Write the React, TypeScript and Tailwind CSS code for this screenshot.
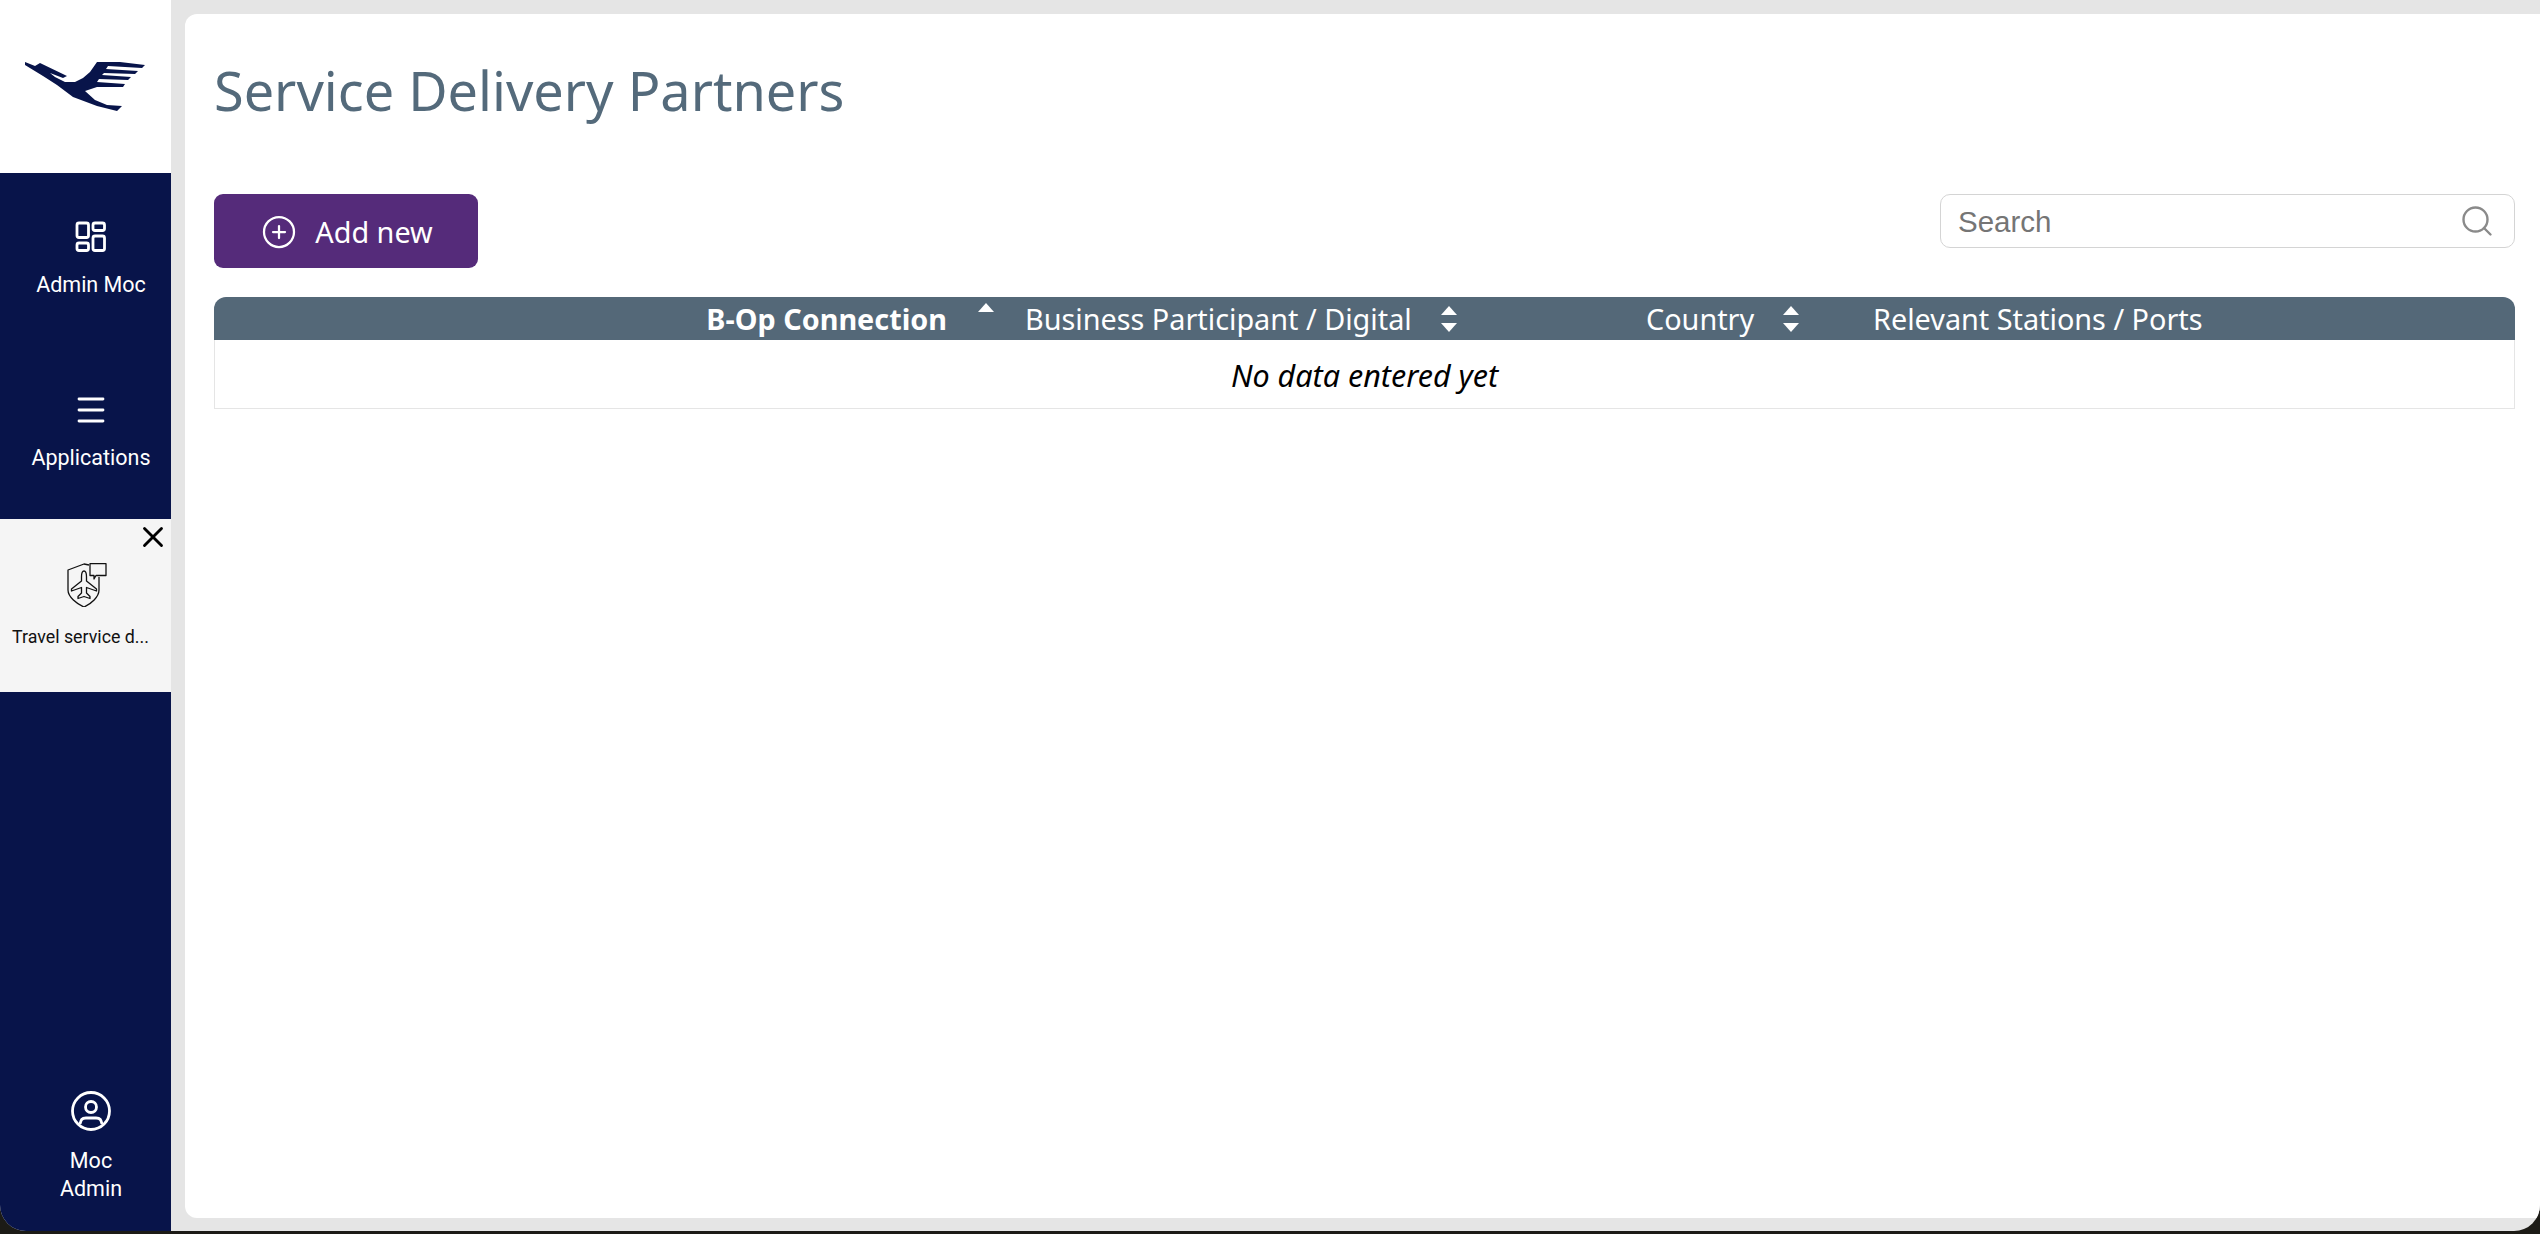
import { CirclePlus, Search, X } from "lucide-react"

const notoSans = "font-['Noto_Sans',sans-serif]"
const roboto = "font-['Roboto',sans-serif]"

function CraneLogo() {
  return (
    <svg viewBox="0 0 171 173" className="h-[173px] w-[171px]" fill="#08144a">
      <path d="M25 62 35 66 40 63 67 76 63 78 50 73 55 77 65 82 75 82 83 78 90 72 97 62 120 62 145 65 142 68 108 66 106 69 138 71 135 74 104 73 102 75 131 77 128 80 99 79 97 82 125 84 123 87 97 87 85 91 95 100 107 105 122 106 117 111 97 106 73 97 57 85 43 76 25 65Z" />
    </svg>
  )
}

function TilesIcon() {
  return (
    <svg viewBox="0 0 32 32" className="h-8 w-8" fill="none" stroke="white" strokeWidth="2.8">
      <rect x="2" y="2" width="11.5" height="14.5" rx="2" />
      <rect x="18" y="2" width="11.5" height="7.5" rx="2" />
      <rect x="2" y="22" width="11.5" height="7.5" rx="2" />
      <rect x="18" y="15" width="11.5" height="14.5" rx="2" />
    </svg>
  )
}

function LinesIcon() {
  return (
    <svg viewBox="0 0 28 26" className="h-[26px] w-7" fill="none" stroke="white" strokeWidth="2.8" strokeLinecap="round">
      <path d="M2 2h24M2 13h24M2 24h24" />
    </svg>
  )
}

function ShieldPlaneIcon() {
  return (
    <svg viewBox="0 0 40 44" className="h-[44px] w-10" fill="none" stroke="#111" strokeWidth="1.3" strokeLinejoin="round">
      <path d="M22 2 17 1 1 7V27C1 34 10 41 17 44 24 41 32 34 32 27V14" />
      <path d="M23 0.7H39V12.5H29L27 16V12.5H23Z" />
      <path d="M17 8C15 8 14.5 11 14.5 14V18L4.5 26V28L14.5 24.5V30L11 33.5V35.5L17 33.5 23 35.5V33.5L19.5 30V24.5L29.5 28V26L19.5 18V14C19.5 11 19 8 17 8Z" />
    </svg>
  )
}

function UserCircleIcon() {
  return (
    <svg viewBox="0 0 40 40" className="h-10 w-10" fill="none" stroke="white" strokeWidth="2.8">
      <circle cx="20" cy="20" r="18.5" />
      <circle cx="20" cy="16" r="5.5" />
      <path d="M9 33C10 29 10.5 27 15 27H25C29.5 27 30 29 31 33" />
    </svg>
  )
}

function SortIcon({ upOnly }: { upOnly?: boolean }) {
  return (
    <svg viewBox="0 0 18 28" className="h-7 w-[18px]" fill="white">
      <path d="M9 1 17 10H1Z" />
      {!upOnly && <path d="M9 27 1 18H17Z" />}
    </svg>
  )
}

function NavItem({ icon, label }: { icon: React.ReactNode; label: string }) {
  return (
    <div className={`flex h-[173px] flex-col items-center justify-center gap-[18px] pl-[11px] ${roboto} text-[21.5px] leading-7 text-white`}>
      <div className="flex h-8 items-center">{icon}</div>
      <span>{label}</span>
    </div>
  )
}

export default function App() {
  return (
    <div className="h-[1234px] overflow-hidden bg-[#1c1b16]">
      <div className="flex h-[1231px] overflow-hidden rounded-b-[26px] bg-[#e5e5e5]">
        <aside className="flex w-[171px] shrink-0 flex-col bg-[#08144a]">
          <div className="h-[173px] bg-white">
            <CraneLogo />
          </div>
          <NavItem icon={<TilesIcon />} label="Admin Moc" />
          <NavItem icon={<LinesIcon />} label="Applications" />
          <div className="relative flex h-[173px] flex-col items-center bg-[#f5f5f5] pt-[44px]">
            <X className="absolute right-[1px] top-[1px] h-[34px] w-[34px] text-black" strokeWidth={2} />
            <div className="pl-[3px]">
              <ShieldPlaneIcon />
            </div>
            <span className={`mt-[18px] pr-[10px] ${roboto} text-[17.8px] leading-6 text-[#111]`}>Travel service d...</span>
          </div>
          <div className={`mt-auto flex flex-col items-center pb-[28px] pl-[11px] ${roboto} text-[21.5px] leading-[28px] text-white`}>
            <UserCircleIcon />
            <span className="mt-[16px]">Moc</span>
            <span>Admin</span>
          </div>
        </aside>

        <main className="mb-[13px] ml-[14px] mt-[14px] flex-1 rounded-l-[12px] bg-white pl-[29px] pr-[25px]">
          <h1 className={`mt-[40px] ${notoSans} text-[54px] leading-[72px] text-[#546a7b]`}>Service Delivery Partners</h1>

          <div className="mt-[68px] flex items-start justify-between">
            <button className={`flex h-[74px] w-[264px] items-center justify-center gap-[18px] rounded-[9px] bg-[#552b7a] pl-[2px] pt-[2px] ${notoSans} text-[28.8px] text-white`}>
              <CirclePlus className="h-9 w-9" strokeWidth={1.5} />
              Add new
            </button>
            <div className="flex h-[54px] w-[575px] items-center rounded-[10px] border border-[#d4d4d4] pl-[17px] pr-[19px]">
              <input
                placeholder="Search"
                className="mt-[2px] min-w-0 flex-1 bg-transparent font-['Liberation_Sans',sans-serif] text-[29.5px] outline-none placeholder:text-[#757575]"
              />
              <Search className="h-[36px] w-[36px] text-[#8a8a8a]" strokeWidth={1.6} />
            </div>
          </div>

          <div className={`mt-[29px] ${notoSans} text-[28.8px]`}>
            <div className="flex h-[43px] items-center rounded-t-[12px] bg-[#546878] text-white">
              <div className="flex w-[786px] items-center justify-end gap-[30px] pr-[5px] font-bold">
                B-Op Connection
                <div className="-mt-[6px]">
                  <SortIcon upOnly />
                </div>
              </div>
              <div className="ml-[25px] flex w-[621px] items-center gap-[28px]">
                Business Participant / Digital
                <SortIcon />
              </div>
              <div className="flex w-[227px] items-center gap-[28px]">
                Country
                <SortIcon />
              </div>
              <div>Relevant Stations / Ports</div>
            </div>
            <div className="flex h-[69px] items-center justify-center border border-t-0 border-[#e5e5e5] pt-[3px] text-[30.5px] italic text-black">
              No data entered yet
            </div>
          </div>
        </main>
      </div>
    </div>
  )
}
